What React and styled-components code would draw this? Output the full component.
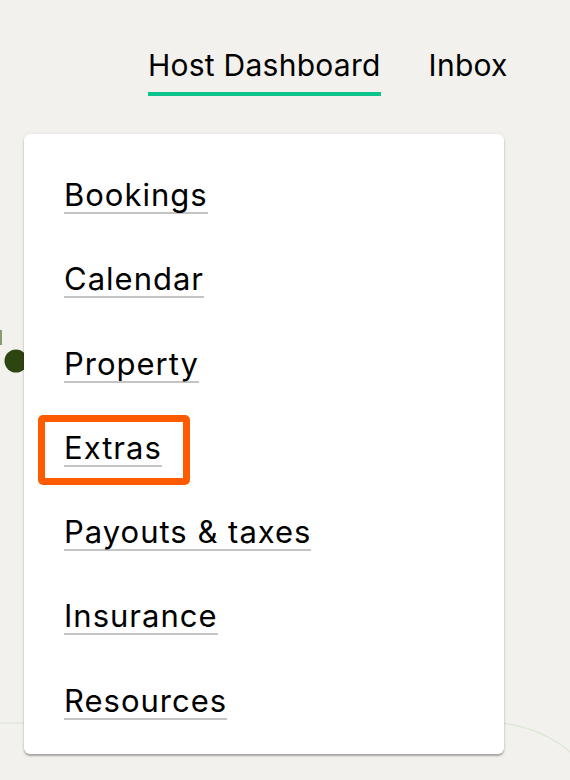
import React from 'react';
import styled, { createGlobalStyle } from 'styled-components';

const GlobalStyle = createGlobalStyle`
    body{
        margin: 0;
        background: #f2f1ed;
        font-family: Inter, "Liberation Sans", sans-serif;
        color: #000000;
    }
`

const items = ['Bookings', 'Calendar', 'Property', 'Extras', 'Payouts & taxes', 'Insurance', 'Resources'];

const Backdrop = () => (
    <BackdropSvg width="570" height="780" viewBox="0 0 570 780">
        <rect x="0" y="330" width="2" height="15" fill="#8a9a70" />
        <circle cx="16" cy="361" r="11.5" fill="#2d4510" />
        <line x1="0" y1="723" x2="30" y2="723" stroke="#dfe7d8" strokeWidth="1.5" />
        <path d="M 500 723 C 530 726, 555 738, 575 756" fill="none" stroke="#dfe7d8" strokeWidth="1.5" />
    </BackdropSvg>
)

const App = () => {
    return(
        <Page>
            <GlobalStyle />
            <Backdrop />
            <Nav>
                <Tab className="active">Host Dashboard</Tab>
                <Tab>Inbox</Tab>
            </Nav>
            <Menu>
                {items.map(item => (
                    <MenuItem key={item}>
                        <MenuLink href="#">{item}</MenuLink>
                        {item === 'Extras' ? <Highlight /> : null}
                    </MenuItem>
                ))}
            </Menu>
        </Page>
    )
}

const Page = styled.div`
    position: relative;
    height: 780px;
    overflow: hidden;
`

const BackdropSvg = styled.svg`
    position: absolute;
    left: 0;
    top: 0;
    z-index: 0;
`

const Nav = styled.nav`
    position: relative;
    z-index: 1;
    display: flex;
    gap: 48px;
    padding: 50px 0 0 148px;
    height: 84px;
    box-sizing: border-box;
`

const Tab = styled.div`
    font-size: 30px;
    line-height: 30px;
    letter-spacing: 0.25px;
    height: 46px;
    box-sizing: border-box;
    &.active{
        border-bottom: 4px solid #0cc48b;
    }
`

const Menu = styled.ul`
    position: relative;
    z-index: 1;
    list-style: none;
    margin: 50px 0 0 24px;
    padding: 45px 0 0 40px;
    width: 480px;
    height: 620px;
    box-sizing: border-box;
    background: #ffffff;
    border-radius: 6px;
    box-shadow: 0 2px 2px rgba(0, 0, 0, 0.3), 0 0 4px rgba(0, 0, 0, 0.06);
    display: flex;
    flex-direction: column;
    gap: 49.3px;
`

const MenuItem = styled.li`
    position: relative;
    height: 35px;
`

const MenuLink = styled.a`
    display: inline-block;
    font-size: 31px;
    line-height: 31px;
    letter-spacing: 1px;
    color: #000000;
    text-decoration: none;
    padding-bottom: 2px;
    border-bottom: 2px solid #c4c4c4;
`

const Highlight = styled.div`
    position: absolute;
    left: -26px;
    top: -17px;
    width: 152px;
    height: 70px;
    box-sizing: border-box;
    border: 7px solid #fe5b00;
    border-radius: 5px;
    pointer-events: none;
`

export default App;
